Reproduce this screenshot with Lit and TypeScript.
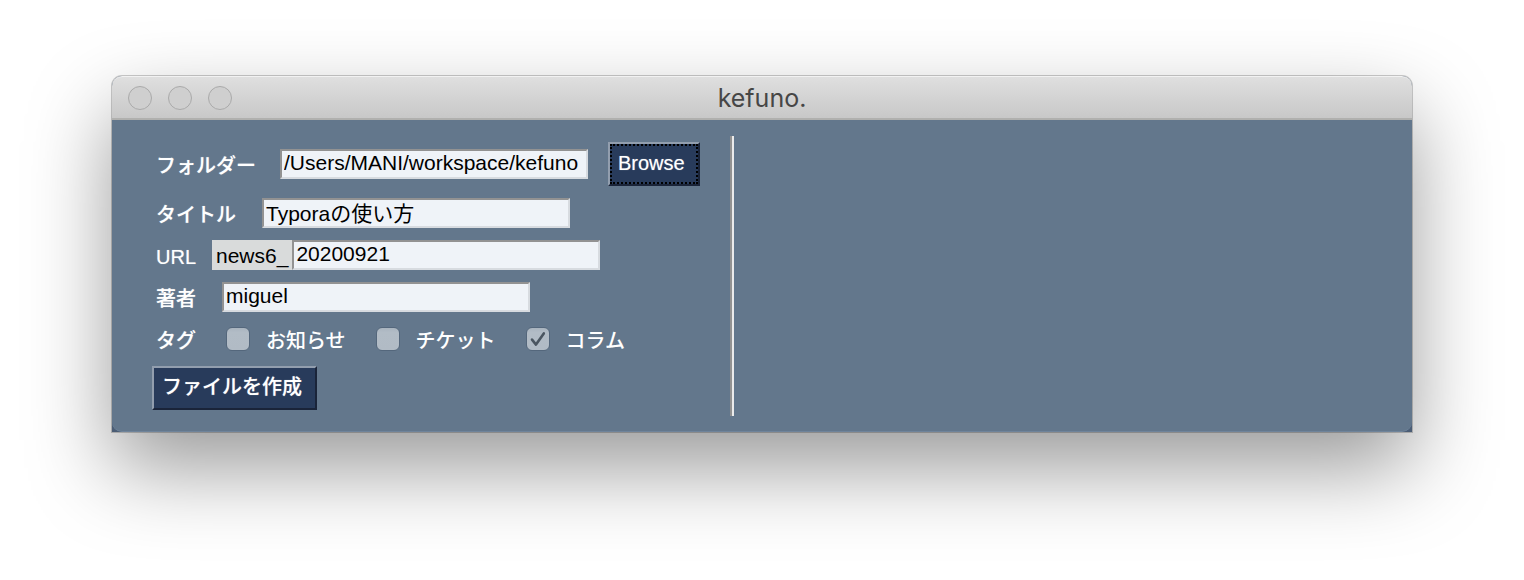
import { LitElement, html, css } from "lit";
import { customElement, property, state } from "lit/decorators.js";

@customElement("tag-option")
class TagOption extends LitElement {
  @property() label = "";
  @property({ type: Boolean }) checked = false;

  static styles = css`
    :host {
      display: block;
    }
    .option {
      display: flex;
      align-items: center;
      gap: 16px;
    }
    .text {
      padding-top: 4px;
      line-height: 26px;
    }
    .control {
      display: grid;
      width: 24px;
      height: 24px;
    }
    .box {
      grid-area: 1 / 1;
      appearance: none;
      box-sizing: border-box;
      width: 24px;
      height: 24px;
      margin: 0;
      border: 1px solid #54677c;
      border-radius: 6px;
      background: linear-gradient(#a9b4bf, #b2bcc6 20%, #b1bbc5);
    }
    .mark {
      grid-area: 1 / 1;
      width: 24px;
      height: 24px;
      pointer-events: none;
      fill: none;
      stroke: #4b5661;
      stroke-width: 2.6;
      stroke-linecap: round;
      stroke-linejoin: round;
    }
  `;

  private toggle(e: Event) {
    this.checked = (e.target as HTMLInputElement).checked;
  }

  render() {
    return html`
      <label class="option">
        <span class="control">
          <input class="box" type="checkbox" .checked=${this.checked} @change=${this.toggle} />
          ${this.checked
            ? html`<svg class="mark" viewBox="0 0 24 24" aria-hidden="true">
                <path d="M6 12.6 L10 17.6 L17.8 6.4" />
              </svg>`
            : null}
        </span>
        <span class="text">${this.label}</span>
      </label>
    `;
  }
}

@customElement("app-root")
class AppRoot extends LitElement {
  @state() private tags = [
    { label: "お知らせ", checked: false },
    { label: "チケット", checked: false },
    { label: "コラム", checked: true },
  ];

  static styles = css`
    :host {
      display: block;
      overflow: hidden;
      min-height: 100vh;
      background: #fff;
      color: #fff;
      font: 20px/30px "Liberation Sans", "Noto Sans CJK JP", sans-serif;
    }
    .window {
      margin: 76px 112px 148px;
      border-radius: 10px 10px 0 0;
      background: #4b5d75;
      box-shadow: 0 0 0 1px rgba(0, 0, 0, 0.2), 0 36px 84px rgba(0, 0, 0, 0.4);
    }
    .titlebar {
      display: grid;
      grid-template-columns: 1fr auto 1fr;
      align-items: center;
      box-sizing: border-box;
      height: 44px;
      padding: 0 16px;
      border-top: 1px solid #f2f2f2;
      border-bottom: 2px solid #b0b0ae;
      border-radius: 10px 10px 0 0;
      background: linear-gradient(#dfdfdf, #c8c8c8);
    }
    .lights {
      display: flex;
      gap: 16px;
    }
    .light {
      box-sizing: border-box;
      width: 24px;
      height: 24px;
      padding: 0;
      border: 1px solid #aaa;
      border-radius: 50%;
      background: #cfcfcf;
    }
    .title {
      margin: 0;
      color: #464646;
      font: 400 25px/40px Inter, sans-serif;
    }
    .body {
      display: grid;
      grid-template-columns: auto auto 1fr;
      box-sizing: border-box;
      padding: 16px 0 15px;
      border-bottom: 1px solid #6f849b;
      border-radius: 0 0 10px 10px;
      background: #63778c;
    }
    .form {
      display: flex;
      flex-direction: column;
      gap: 12px;
      padding: 6px 30px 6px 40px;
    }
    .row {
      display: flex;
      align-items: center;
    }
    .caption {
      padding: 4px 0 0 4px;
      font-weight: 500;
      line-height: 26px;
      text-shadow: 0 0 1px rgba(255, 255, 255, 0.5);
    }
    .near {
      margin-right: 16px;
    }
    .mid {
      margin-right: 24px;
    }
    .far {
      margin-right: 26px;
    }
    .field {
      box-sizing: border-box;
      width: 308px;
      height: 30px;
      padding: 0 2px 2px;
      border: 2px solid;
      border-color: #929292 #d7dbe0 #d7dbe0 #929292;
      border-radius: 0;
      outline: none;
      background: #eff3f8;
      color: #000;
      font: inherit;
      font-size: 21px;
      line-height: 24px;
    }
    .prefix {
      padding: 2px 4px 0;
      background: #d9dbdb;
      color: #000;
      font-size: 21px;
      line-height: 28px;
    }
    .tags {
      display: flex;
      gap: 30px;
      margin-left: 30px;
      font-weight: 500;
    }
    .push {
      height: 44px;
      padding: 0 13px 2px 8px;
      border: 2px solid;
      border-color: #929eae #1a2439 #1a2439 #929eae;
      border-radius: 0;
      background: #283b5b;
      color: #fff;
      font: inherit;
      font-weight: 500;
      line-height: 38px;
      text-shadow: 0 0 1px rgba(255, 255, 255, 0.5);
    }
    .browse {
      margin-left: 20px;
      outline: 2px dotted #000;
      outline-offset: -4px;
    }
    .divider {
      width: 2px;
      border-left: 2px solid #929292;
      background: #ebebeb;
    }
  `;

  render() {
    return html`
      <main class="window">
        <header class="titlebar">
          <div class="lights">
            <button class="light" aria-label="Close"></button>
            <button class="light" aria-label="Minimize"></button>
            <button class="light" aria-label="Zoom"></button>
          </div>
          <h1 class="title">kefuno.</h1>
        </header>
        <div class="body">
          <form class="form" @submit=${(e: Event) => e.preventDefault()}>
            <div class="row">
              <label class="caption mid" for="folder">フォルダー</label>
              <input class="field" id="folder" value="/Users/MANI/workspace/kefuno" />
              <button class="push browse" type="button">Browse</button>
            </div>
            <div class="row">
              <label class="caption far" for="title">タイトル</label>
              <input class="field" id="title" value="Typoraの使い方" />
            </div>
            <div class="row">
              <label class="caption near" for="url">URL</label>
              <span class="prefix">news6_</span>
              <input class="field" id="url" value="20200921" />
            </div>
            <div class="row">
              <label class="caption far" for="author">著者</label>
              <input class="field" id="author" value="miguel" />
            </div>
            <div class="row" role="group" aria-labelledby="tags">
              <span class="caption" id="tags">タグ</span>
              <div class="tags">
                ${this.tags.map(
                  (t) => html`<tag-option .label=${t.label} .checked=${t.checked}></tag-option>`
                )}
              </div>
            </div>
            <div class="row">
              <button class="push" type="submit">ファイルを作成</button>
            </div>
          </form>
          <div class="divider"></div>
        </div>
      </main>
    `;
  }
}
